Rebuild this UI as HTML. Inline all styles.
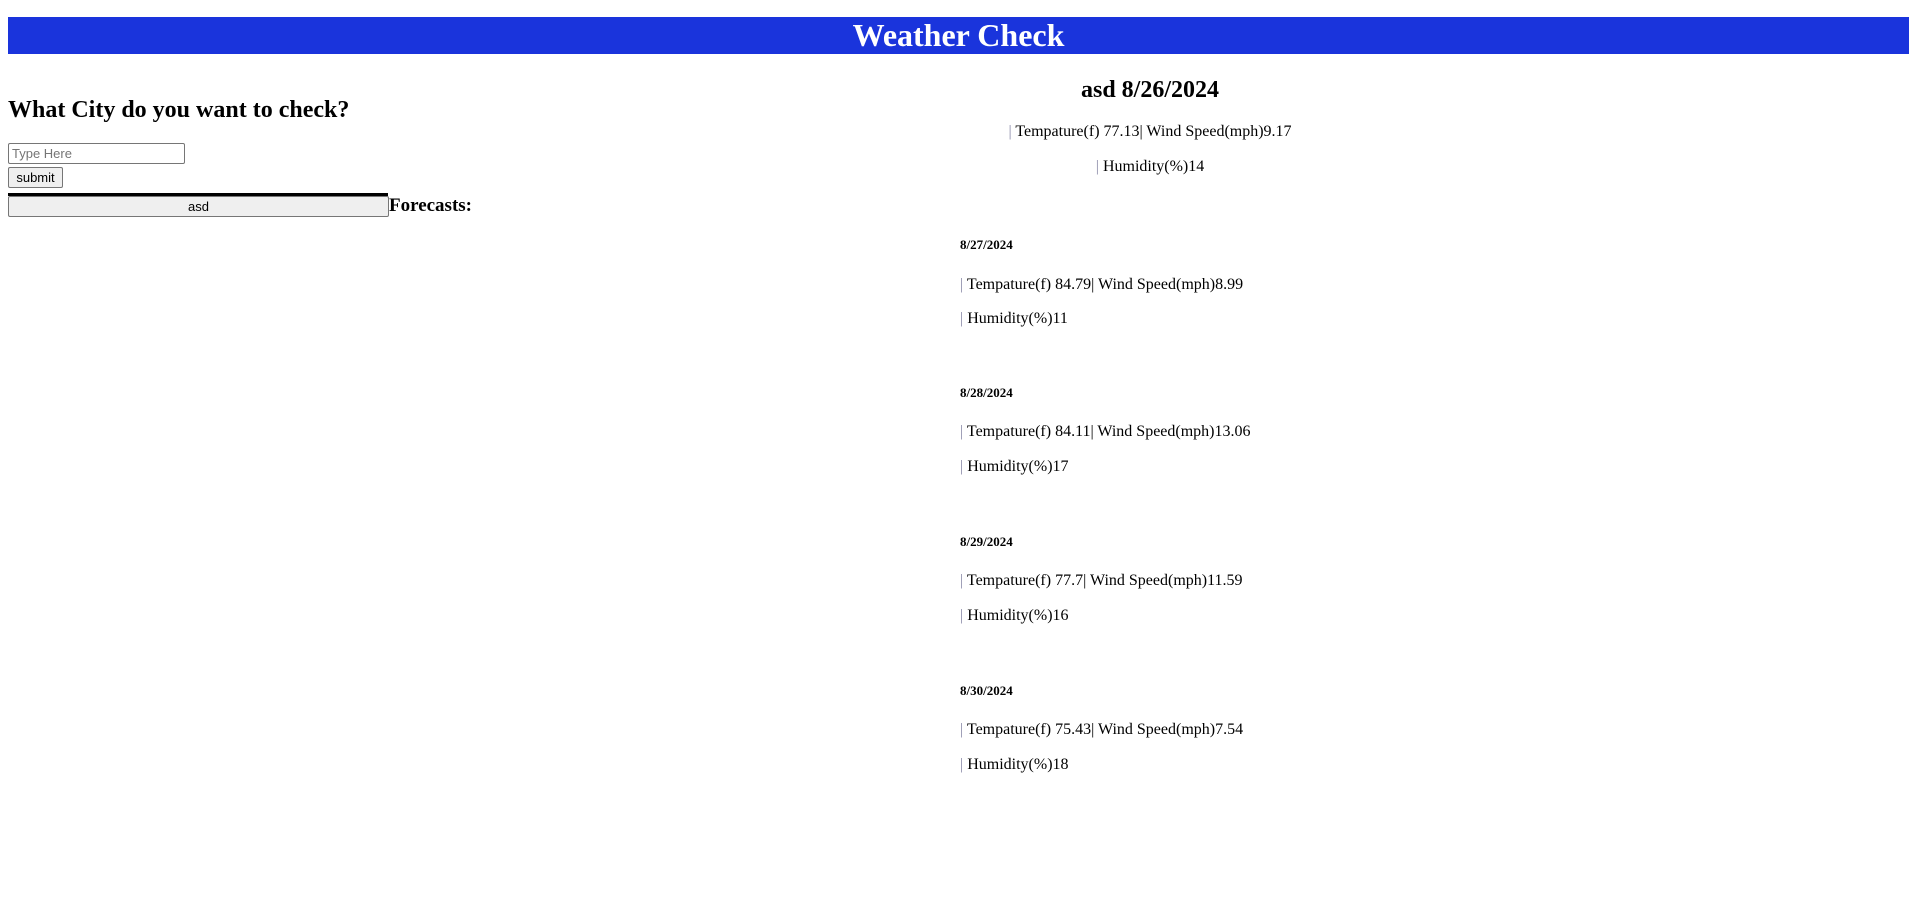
<!DOCTYPE html>
<html><head><meta charset="utf-8"><style>
html,body{margin:0;padding:0;background:#fff;width:1909px;height:898px;overflow:hidden;font-family:"Liberation Serif",serif;color:#000}
.a{position:absolute;white-space:nowrap}
.bar{position:absolute;left:8px;top:17px;width:1901px;height:37px;background:#1a34dc}
.title{left:0;width:1917px;text-align:center;top:17px;line-height:37px;font-size:32px;font-weight:bold;color:#fff}
.h2{font-size:24px;font-weight:bold;line-height:30px}
.p{font-size:16px;line-height:20px}
.h5{font-size:13px;font-weight:bold;line-height:16px}
.pp{color:#8a8aa8}
input,button{font-family:"Liberation Sans",sans-serif;font-size:13px;box-sizing:border-box;margin:0}
</style></head><body>
<div class="bar"></div>
<div class="a title">Weather Check</div>
<div class="a h2" style="left:8px;top:95px">What City do you want to check?</div>
<input class="a" style="left:8px;top:143px;width:177px;height:21px;border:1px solid #767676;border-radius:2px;padding:1px 3px;" placeholder="Type Here">
<button class="a" style="left:8px;top:167px;width:55px;height:21px;border:1px solid #767676;border-radius:2px;background:#efefef;padding:0">submit</button>
<div class="a" style="left:8px;top:193px;width:380px;height:3px;background:#000"></div>
<button class="a" style="left:8px;top:196px;width:381px;height:21px;border:1px solid #767676;border-radius:2px;background:#efefef;padding:0">asd</button>
<div class="a" style="left:389px;top:195px;font-size:19px;font-weight:bold;line-height:22px">Forecasts:</div>

<div class="a h2" style="left:950px;width:400px;text-align:center;top:75px">asd 8/26/2024</div>
<div class="a p" style="left:950px;width:400px;text-align:center;top:122px"><span class="pp">|</span> Tempature(f) 77.13| Wind Speed(mph)9.17</div>
<div class="a p" style="left:950px;width:400px;text-align:center;top:157px"><span class="pp">|</span> Humidity(%)14</div>

<div class="a h5" style="left:960px;top:237px">8/27/2024</div>
<div class="a p" style="left:960px;top:275px"><span class="pp">|</span> Tempature(f) 84.79| Wind Speed(mph)8.99</div>
<div class="a p" style="left:960px;top:309px"><span class="pp">|</span> Humidity(%)11</div>

<div class="a h5" style="left:960px;top:385px">8/28/2024</div>
<div class="a p" style="left:960px;top:422px"><span class="pp">|</span> Tempature(f) 84.11| Wind Speed(mph)13.06</div>
<div class="a p" style="left:960px;top:457px"><span class="pp">|</span> Humidity(%)17</div>

<div class="a h5" style="left:960px;top:534px">8/29/2024</div>
<div class="a p" style="left:960px;top:571px"><span class="pp">|</span> Tempature(f) 77.7| Wind Speed(mph)11.59</div>
<div class="a p" style="left:960px;top:606px"><span class="pp">|</span> Humidity(%)16</div>

<div class="a h5" style="left:960px;top:683px">8/30/2024</div>
<div class="a p" style="left:960px;top:720px"><span class="pp">|</span> Tempature(f) 75.43| Wind Speed(mph)7.54</div>
<div class="a p" style="left:960px;top:755px"><span class="pp">|</span> Humidity(%)18</div>
</body></html>
